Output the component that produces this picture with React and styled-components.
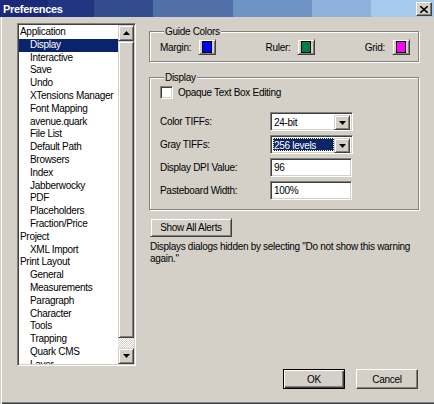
import React from "react";
import styled, { createGlobalStyle } from "styled-components";

// classic win2k dialog look

const GlobalStyle = createGlobalStyle`
  html, body {
    margin: 0;
    padding: 0;
    background: #d4d0c8;
  }
  body {
    font-family: "Liberation Sans", Arial, sans-serif;
    font-size: 10px;
    letter-spacing: -0.3px;
    color: #000;
  }
`;

const navItems = [
  { label: "Application", level: 0 },
  { label: "Display", level: 1, selected: true },
  { label: "Interactive", level: 1 },
  { label: "Save", level: 1 },
  { label: "Undo", level: 1 },
  { label: "XTensions Manager", level: 1 },
  { label: "Font Mapping", level: 1 },
  { label: "avenue.quark", level: 1 },
  { label: "File List", level: 1 },
  { label: "Default Path", level: 1 },
  { label: "Browsers", level: 1 },
  { label: "Index", level: 1 },
  { label: "Jabberwocky", level: 1 },
  { label: "PDF", level: 1 },
  { label: "Placeholders", level: 1 },
  { label: "Fraction/Price", level: 1 },
  { label: "Project", level: 0 },
  { label: "XML Import", level: 1 },
  { label: "Print Layout", level: 0 },
  { label: "General", level: 1 },
  { label: "Measurements", level: 1 },
  { label: "Paragraph", level: 1 },
  { label: "Character", level: 1 },
  { label: "Tools", level: 1 },
  { label: "Trapping", level: 1 },
  { label: "Quark CMS", level: 1 },
  { label: "Layer", level: 1 },
];

const guideColors = [
  { label: "Margin:", color: "#0000ff" },
  { label: "Ruler:", color: "#008040" },
  { label: "Grid:", color: "#ff00ff" },
];

const Arrow = ({ down }) => (
  <svg width="7" height="4" viewBox="0 0 7 4">
    <path d={down ? "M0 0h7L3.5 4z" : "M0 4h7L3.5 0z"} fill="#000" />
  </svg>
);

const App = () => {
  return (
    <>
      <GlobalStyle />
      <Window>
        <TitleBar>
          <Title>Preferences</Title>
          <CloseButton>
            <svg width="8" height="7" viewBox="0 0 8 7">
              <path d="M0 0L8 7M8 0L0 7" stroke="#000" strokeWidth="1.6" />
            </svg>
          </CloseButton>
        </TitleBar>
        <Body>
          <MainRow>
            <ListBox>
              <ItemList>
                {navItems.map((item) => (
                  <ListItem
                    key={item.label}
                    $level={item.level}
                    $selected={item.selected}
                  >
                    {item.label}
                  </ListItem>
                ))}
              </ItemList>
              <ScrollBar>
                <ScrollButton>
                  <Arrow />
                </ScrollButton>
                <Thumb />
                <Track />
                <ScrollButton>
                  <Arrow down />
                </ScrollButton>
              </ScrollBar>
            </ListBox>

            <RightColumn>
              <GroupBox>
                <Legend>Guide Colors</Legend>
                <ColorRow>
                  {guideColors.map((g) => (
                    <ColorItem key={g.label}>
                      <span>{g.label}</span>
                      <SwatchButton>
                        <Swatch $color={g.color} />
                      </SwatchButton>
                    </ColorItem>
                  ))}
                </ColorRow>
              </GroupBox>

              <DisplayBox>
                <Legend>Display</Legend>
                <CheckRow>
                  <CheckBox />
                  <span>Opaque Text Box Editing</span>
                </CheckRow>
                <FieldRow>
                  <FieldLabel>Color TIFFs:</FieldLabel>
                  <Select>
                    <SelectValue>24-bit</SelectValue>
                    <DropButton>
                      <Arrow down />
                    </DropButton>
                  </Select>
                </FieldRow>
                <FieldRow>
                  <FieldLabel>Gray TIFFs:</FieldLabel>
                  <Select>
                    <SelectValue $focused>256 levels</SelectValue>
                    <DropButton>
                      <Arrow down />
                    </DropButton>
                  </Select>
                </FieldRow>
                <FieldRow>
                  <FieldLabel>Display DPI Value:</FieldLabel>
                  <TextField>96</TextField>
                </FieldRow>
                <FieldRow>
                  <FieldLabel>Pasteboard Width:</FieldLabel>
                  <TextField>100%</TextField>
                </FieldRow>
              </DisplayBox>

              <AlertsButton>Show All Alerts</AlertsButton>
              <Note>
                Displays dialogs hidden by selecting "Do not show this warning
                again."
              </Note>
            </RightColumn>
          </MainRow>

          <Footer>
            <DialogButton $default>OK</DialogButton>
            <DialogButton>Cancel</DialogButton>
          </Footer>
        </Body>
      </Window>
    </>
  );
};

export default App;

const Window = styled.div`
  width: 434px;
  height: 404px;
  display: flex;
  flex-direction: column;
  background: #d4d0c8;
  overflow: hidden;
`;

const TitleBar = styled.div`
  height: 17px;
  flex: 0 0 17px;
  display: flex;
  align-items: center;
  justify-content: space-between;
  padding: 0 2px 0 3px;
  background: linear-gradient(
    to right,
    #1a2978 0 48px,
    #223583 48px 94px,
    #324c8d 94px 153px,
    #5170a8 153px 233px,
    #6e92c3 233px 312px,
    #8eb1dc 312px 371px,
    #a6c9ee 371px
  );
`;

const Title = styled.span`
  color: #fff;
  font-weight: 700;
  font-size: 11px;
  letter-spacing: -0.3px;
`;

const CloseButton = styled.div`
  width: 16px;
  height: 14px;
  box-sizing: border-box;
  margin-top: 1px;
  display: flex;
  align-items: center;
  justify-content: center;
  background: #d4d0c8;
  border: 1px solid;
  border-color: #fff #404040 #404040 #fff;
  box-shadow: inset -1px -1px 0 #808080;
`;

const Body = styled.div`
  flex: 1;
  display: flex;
  flex-direction: column;
  padding-top: 6px;
  box-shadow: inset 1px 0 0 #d4d0c8, inset 2px 0 0 #fff,
    inset 0 -1px 0 #404040, inset 0 -2px 0 #808080;
`;

const MainRow = styled.div`
  display: flex;
  height: 343px;
`;

const ListBox = styled.div`
  width: 119px;
  height: 343px;
  margin-left: 17px;
  box-sizing: border-box;
  display: flex;
  background: #fff;
  border: 1px solid;
  border-color: #808080 #fff #fff #808080;
  box-shadow: inset 1px 1px 0 #404040, inset -1px -1px 0 #d4d0c8;
  padding: 1px;
`;

const ItemList = styled.div`
  flex: 1;
  overflow: hidden;
  padding-top: 1px;
`;

const ListItem = styled.div`
  height: 12.8px;
  line-height: 12.8px;
  white-space: nowrap;
  padding-left: ${(p) => (p.$level ? 11 : 1)}px;
  background: ${(p) => (p.$selected ? "#0a246a" : "transparent")};
  color: ${(p) => (p.$selected ? "#fff" : "#000")};
`;

const ScrollBar = styled.div`
  width: 16px;
  display: flex;
  flex-direction: column;
`;

const raised = `
  background: #d4d0c8;
  box-sizing: border-box;
  border: 1px solid;
  border-color: #d4d0c8 #404040 #404040 #d4d0c8;
  box-shadow: inset 1px 1px 0 #fff, inset -1px -1px 0 #808080;
`;

const ScrollButton = styled.div`
  ${raised}
  height: 16px;
  flex: 0 0 16px;
  display: flex;
  align-items: center;
  justify-content: center;
`;

const Thumb = styled.div`
  ${raised}
  flex: 0 0 297px;
`;

const Track = styled.div`
  flex: 1;
  background-color: #fff;
  background-image: repeating-conic-gradient(
    #d4d0c8 0 25%,
    #fff 0 50%
  );
  background-size: 2px 2px;
`;

const RightColumn = styled.div`
  width: 270px;
  margin-left: 13px;
  padding-top: 2px;
  display: flex;
  flex-direction: column;
  align-items: flex-start;
`;

const GroupBox = styled.fieldset`
  width: 270px;
  box-sizing: border-box;
  margin: 0;
  padding: 1px 8px 6px 10px;
  border: 1px solid #808080;
  box-shadow: inset 1px 1px 0 #fff, 1px 1px 0 #fff;
  min-inline-size: 0;
`;

const Legend = styled.legend`
  padding: 0 1px;
  margin-left: 4px;
  line-height: 13px;
  background: #d4d0c8;
  position: relative;
`;

const ColorRow = styled.div`
  display: flex;
  justify-content: space-between;
  align-items: center;
`;

const ColorItem = styled.div`
  display: flex;
  align-items: center;
  gap: 7px;
`;

const SwatchButton = styled.div`
  ${raised}
  width: 18px;
  height: 16px;
  display: flex;
  align-items: center;
  justify-content: center;
`;

const Swatch = styled.div`
  width: 10px;
  height: 12px;
  box-sizing: border-box;
  border: 1px solid #000;
  background: ${(p) => p.$color};
`;

const DisplayBox = styled(GroupBox)`
  margin-top: 9px;
  padding: 2px 8px 9px 10px;
  display: flex;
  flex-direction: column;
  gap: 4px;
`;

const CheckRow = styled.div`
  display: flex;
  align-items: center;
  gap: 5px;
  height: 13px;
  margin-bottom: 9px;
`;

const CheckBox = styled.div`
  width: 13px;
  height: 13px;
  box-sizing: border-box;
  background: #fff;
  border: 1px solid;
  border-color: #808080 #fff #fff #808080;
  box-shadow: inset 1px 1px 0 #404040, inset -1px -1px 0 #d4d0c8;
`;

const FieldRow = styled.div`
  display: flex;
  align-items: center;
  height: 19px;
`;

const FieldLabel = styled.span`
  width: 110px;
`;

const sunken = `
  background: #fff;
  box-sizing: border-box;
  border: 1px solid;
  border-color: #808080 #fff #fff #808080;
  box-shadow: inset 1px 1px 0 #404040, inset -1px -1px 0 #d4d0c8;
`;

const Select = styled.div`
  ${sunken}
  width: 83px;
  height: 19px;
  display: flex;
  padding: 2px;
`;

const SelectValue = styled.div`
  flex: 1;
  line-height: 15px;
  padding-left: 1px;
  white-space: nowrap;
  background: ${(p) => (p.$focused ? "#0a246a" : "transparent")};
  color: ${(p) => (p.$focused ? "#fff" : "#000")};
  outline: ${(p) => (p.$focused ? "1px dotted #ffff90" : "none")};
  outline-offset: -1px;
`;

const DropButton = styled.div`
  ${raised}
  width: 16px;
  height: 15px;
  display: flex;
  align-items: center;
  justify-content: center;
`;

const TextField = styled.div`
  ${sunken}
  width: 82px;
  height: 19px;
  padding: 0 3px;
  line-height: 17px;
`;

const AlertsButton = styled.div`
  ${raised}
  margin-top: 8px;
  margin-left: 1px;
  width: 82px;
  height: 19px;
  display: flex;
  align-items: center;
  justify-content: center;
`;

const Note = styled.p`
  margin: 4px 0 0 1px;
  line-height: 12px;
  width: 262px;
`;

const Footer = styled.div`
  display: flex;
  justify-content: flex-end;
  gap: 11px;
  margin-top: 3px;
  padding-right: 16px;
`;

const DialogButton = styled.div`
  width: 62px;
  height: 20px;
  box-sizing: border-box;
  display: flex;
  align-items: center;
  justify-content: center;
  background: #d4d0c8;
  border: 1px solid;
  border-color: ${(p) =>
    p.$default ? "#000" : "#fff #404040 #404040 #fff"};
  box-shadow: ${(p) =>
    p.$default
      ? "inset 1px 1px 0 #fff, inset -1px -1px 0 #404040, inset -2px -2px 0 #808080"
      : "inset -1px -1px 0 #808080"};
`;
